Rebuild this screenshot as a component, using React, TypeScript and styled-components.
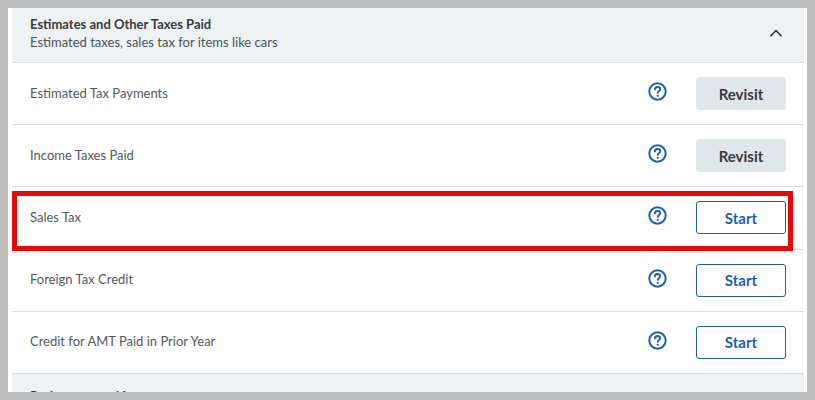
import * as React from 'react'
import styled, { createGlobalStyle } from 'styled-components'

const GlobalStyle = createGlobalStyle`
  html, body {
    margin: 0;
    padding: 0;
    background: #bebebe;
    font-family: Lato, "Open Sans", "Liberation Sans", sans-serif;
  }
`

const rows = [
  { label: 'Estimated Tax Payments', action: 'Revisit' },
  { label: 'Income Taxes Paid', action: 'Revisit' },
  { label: 'Sales Tax', action: 'Start', highlighted: true },
  { label: 'Foreign Tax Credit', action: 'Start' },
  { label: 'Credit for AMT Paid in Prior Year', action: 'Start' },
]

const HelpIcon = () => (
  <svg width="19" height="19" viewBox="0 0 19 19" fill="none">
    <circle cx="9.5" cy="9.5" r="8.2" stroke="#1f5fa8" strokeWidth="2" />
    <path
      d="M6.9 7.4c.1-1.5 1.2-2.4 2.7-2.4 1.5 0 2.6.9 2.6 2.2 0 1-.6 1.6-1.4 2.1-.7.5-1 .8-1 1.6"
      stroke="#1f5fa8"
      strokeWidth="1.9"
      strokeLinecap="round"
    />
    <circle cx="9.7" cy="13.8" r="1.1" fill="#1f5fa8" />
  </svg>
)

const Chevron = () => (
  <svg width="12" height="8" viewBox="0 0 12 8" fill="none">
    <path d="M1 6.8 6 1.6l5 5.2" stroke="#23282d" strokeWidth="1.5" strokeLinecap="round" />
  </svg>
)

const App: React.FC<{}> = () => {
  return (
    <React.Fragment>
      <GlobalStyle />
      <Frame>
        <Page>
          <Panel>
            <SectionHeader>
              <div>
                <SectionTitle>Estimates and Other Taxes Paid</SectionTitle>
                <SectionSubtitle>Estimated taxes, sales tax for items like cars</SectionSubtitle>
              </div>
              <ChevronSlot>
                <Chevron />
              </ChevronSlot>
            </SectionHeader>
            {rows.map(({ label, action, highlighted }) => (
              <Row key={label}>
                <RowLabel>{label}</RowLabel>
                <HelpSlot>
                  <HelpIcon />
                </HelpSlot>
                <ActionButton $filled={action === 'Revisit'}>{action}</ActionButton>
                {highlighted && <Highlight />}
              </Row>
            ))}
            <SectionHeader $collapsed>
              <div>
                <SectionTitle>Retirement and Investments</SectionTitle>
              </div>
            </SectionHeader>
          </Panel>
        </Page>
      </Frame>
    </React.Fragment>
  )
}

const Frame = styled.div`
  box-sizing: border-box;
  width: 815px;
  height: 400px;
  padding: 8px;
`

const Page = styled.div`
  box-sizing: border-box;
  width: 799px;
  height: 384px;
  padding: 0 3px 0 4px;
  background: #fff;
  overflow: hidden;
`

const Panel = styled.div`
  display: flex;
  flex-direction: column;
`

const SectionHeader = styled.div<{ $collapsed?: boolean }>`
  box-sizing: border-box;
  flex: none;
  display: flex;
  justify-content: space-between;
  height: 55px;
  padding: ${(p) => (p.$collapsed ? '14px' : '8px')} 22px 0 18px;
  background: #eef2f5;
  border-bottom: 1px solid #d6dfe6;
`

const SectionTitle = styled.div`
  font-size: 13px;
  line-height: 17px;
  font-weight: 700;
  color: #393a3d;
`

const SectionSubtitle = styled.div`
  font-size: 13px;
  line-height: 18px;
  color: #4d5257;
`

const ChevronSlot = styled.div`
  padding-top: 5px;
`

const Row = styled.div`
  box-sizing: border-box;
  position: relative;
  flex: none;
  display: flex;
  align-items: center;
  height: 62.2px;
  padding: 0 18px;
  border-bottom: 1px solid #d6dfe6;
`

const RowLabel = styled.div`
  flex: 1;
  margin-top: -2px;
  font-size: 13px;
  color: #54585c;
`

const HelpSlot = styled.div`
  display: flex;
  margin: -4px 29px 0 0;
`

const ActionButton = styled.button<{ $filled?: boolean }>`
  box-sizing: border-box;
  width: 90px;
  height: 33px;
  padding: 0;
  font-family: inherit;
  font-size: 15px;
  font-weight: 700;
  border-radius: 3px;
  color: ${(p) => (p.$filled ? '#393a3d' : '#1f5fa8')};
  background: ${(p) => (p.$filled ? '#e0e7eb' : '#fff')};
  border: 1px solid ${(p) => (p.$filled ? '#e0e7eb' : '#1f5fa8')};
`

const Highlight = styled.div`
  position: absolute;
  left: 0;
  top: 4px;
  width: 781px;
  height: 60px;
  box-sizing: border-box;
  border: 5px solid #e80808;
  pointer-events: none;
`

export default App
